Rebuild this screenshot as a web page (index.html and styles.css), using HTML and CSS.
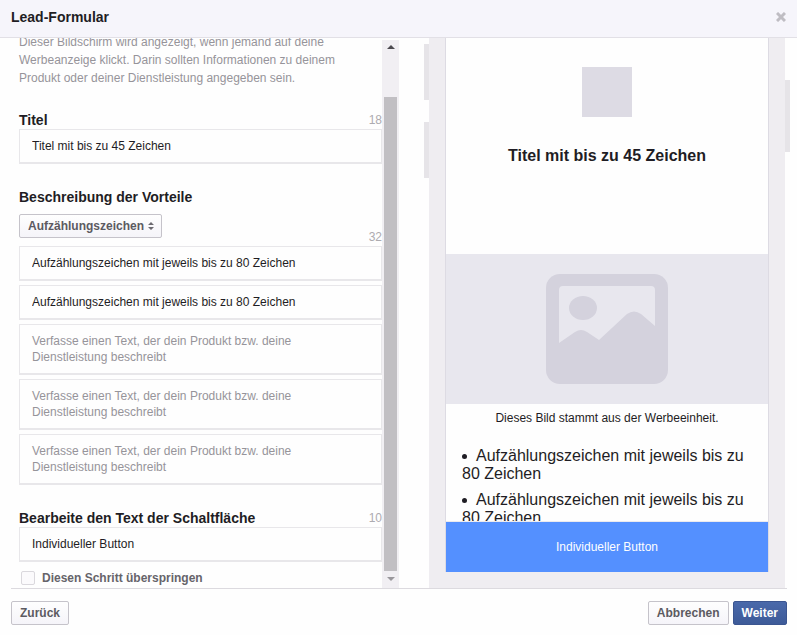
FILE: index.html
```html
<!DOCTYPE html>
<html lang="de">
<head>
  <meta charset="UTF-8" />
  <meta name="viewport" content="width=device-width, initial-scale=1.0" />
  <title>Lead-Formular</title>
  <link rel="stylesheet" href="styles.css">
</head>
<body>
  <div class="dialog">
    <header class="dialog-header">
      <h1>Lead-Formular</h1>
      <button type="button" class="close" aria-label="Schließen">
        <svg width="10" height="10" viewBox="0 0 10 10"><path d="M1 1l8 8M9 1l-8 8" stroke="#bfbdc3" stroke-width="3" fill="none"/></svg>
      </button>
    </header>

    <main class="dialog-body">
      <div class="form-pane">
        <form id="leadForm" class="lead-form">
          <p class="intro">Dieser Bildschirm wird angezeigt, wenn jemand auf deine Werbeanzeige klickt. Darin sollten Informationen zu deinem Produkt oder deiner Dienstleistung angegeben sein.</p>

          <section class="group">
            <div class="group-head">
              <label for="title">Titel</label>
              <span class="count">18</span>
            </div>
            <input class="field" type="text" id="title" value="Titel mit bis zu 45 Zeichen" />
          </section>

          <section class="group">
            <div class="group-head">
              <label for="format">Beschreibung der Vorteile</label>
            </div>
            <div class="format-row">
              <div class="select-wrap">
                <select id="format">
                  <option>Aufzählungszeichen</option>
                  <option>Absatz</option>
                </select>
                <svg class="select-arrows" width="6" height="8" viewBox="0 0 6 8"><path d="M0 3l3-3 3 3zM0 5h6l-3 3z" fill="#6c6a70"/></svg>
              </div>
              <span class="count">32</span>
            </div>
            <div class="bullets">
              <input class="field" type="text" aria-label="Vorteil 1" value="Aufzählungszeichen mit jeweils bis zu 80 Zeichen" />
              <input class="field" type="text" aria-label="Vorteil 2" value="Aufzählungszeichen mit jeweils bis zu 80 Zeichen" />
              <textarea class="field" rows="2" aria-label="Vorteil 3" placeholder="Verfasse einen Text, der dein Produkt bzw. deine Dienstleistung beschreibt"></textarea>
              <textarea class="field" rows="2" aria-label="Vorteil 4" placeholder="Verfasse einen Text, der dein Produkt bzw. deine Dienstleistung beschreibt"></textarea>
              <textarea class="field" rows="2" aria-label="Vorteil 5" placeholder="Verfasse einen Text, der dein Produkt bzw. deine Dienstleistung beschreibt"></textarea>
            </div>
          </section>

          <section class="group">
            <div class="group-head">
              <label for="buttonText">Bearbeite den Text der Schaltfläche</label>
              <span class="count">10</span>
            </div>
            <input class="field" type="text" id="buttonText" value="Individueller Button" />
          </section>

          <div class="skip">
            <input type="checkbox" id="skip" />
            <label for="skip">Diesen Schritt überspringen</label>
          </div>
        </form>

        <div class="scrollbar" aria-hidden="true">
          <span class="arrow up"></span>
          <span class="thumb"></span>
          <span class="arrow down"></span>
        </div>
      </div>

      <div class="phone">
        <span class="key volume-up"></span>
        <span class="key volume-down"></span>
        <span class="key power"></span>
        <div class="screen">
          <div class="screen-content">
            <div class="logo"></div>
            <h2>Titel mit bis zu 45 Zeichen</h2>
            <div class="picture">
              <svg width="122" height="110" viewBox="0 0 122 110">
                <rect width="122" height="110" rx="14" fill="#d4d2dd"/>
                <path d="M17 12h88q4 0 4 4v36L95 40q-7-5-14 0L53 66 41 58q-6-4-12 0L13 69V16q0-4 4-4z" fill="#e8e7ee"/>
                <ellipse cx="37" cy="34" rx="14" ry="12" fill="#d4d2dd"/>
              </svg>
            </div>
            <p class="caption">Dieses Bild stammt aus der Werbeeinheit.</p>
            <ul>
              <li>Aufzählungszeichen mit jeweils bis zu 80 Zeichen</li>
              <li>Aufzählungszeichen mit jeweils bis zu 80 Zeichen</li>
            </ul>
          </div>
          <button type="button" class="cta">Individueller Button</button>
        </div>
      </div>
    </main>

    <footer class="dialog-footer">
      <button type="button" class="btn">Zurück</button>
      <div class="actions">
        <button type="button" class="btn">Abbrechen</button>
        <button type="submit" form="leadForm" class="btn primary">Weiter</button>
      </div>
    </footer>
  </div>
</body>
</html>
```

FILE: styles.css
```css
* {
  box-sizing: border-box;
}
body {
  margin: 0;
  font-family: "Liberation Sans", Arial, sans-serif;
  font-size: 12px;
  color: #1f1d24;
  background-color: #fefefe;
}
h1, h2, p, ul {
  margin: 0;
  padding: 0;
}
button, input, select, textarea {
  font: inherit;
  color: inherit;
  margin: 0;
}
svg {
  display: block;
}
.dialog {
  display: flex;
  flex-direction: column;
  height: 100vh;
}

/* header */
.dialog-header {
  display: flex;
  align-items: center;
  justify-content: space-between;
  height: 38px;
  padding: 0 11px 3px;
  background-color: #f6f5fb;
  border-bottom: 1px solid #e2e0e6;
}
.dialog-header h1 {
  font-size: 14px;
  line-height: 18px;
}
.close {
  padding: 0;
  border: 0;
  background: none;
}

.dialog-body {
  display: flex;
  flex: 1;
  min-height: 0;
  gap: 30px;
  padding-right: 12px;
  overflow: hidden;
}

/* form */
.form-pane {
  display: flex;
  flex: 1;
  min-width: 0;
  overflow: hidden;
}
.lead-form {
  flex: 1;
  min-width: 0;
  margin-top: -5px;
  padding-left: 19px;
}
.intro {
  max-width: 340px;
  line-height: 18px;
  color: #96949a;
}
.group {
  margin-top: 24px;
}
.group-head {
  display: flex;
  justify-content: space-between;
  line-height: 18px;
}
.group-head label {
  font-size: 14px;
  font-weight: bold;
}
.count {
  font-size: 12px;
  line-height: 18px;
  color: #adabb0;
}
.format-row {
  display: flex;
  justify-content: space-between;
  align-items: flex-end;
  height: 40px;
}
.select-wrap {
  position: relative;
  align-self: flex-start;
  margin-top: 8px;
}
.select-wrap select {
  appearance: none;
  display: block;
  height: 24px;
  padding: 0 16px 0 8px;
  border: 1px solid #c5c3ca;
  border-radius: 2px;
  background: linear-gradient(#fefefe, #f5f4f9);
  font-weight: bold;
  color: #5c5a61;
}
.select-arrows {
  position: absolute;
  top: 8px;
  right: 8px;
}
.bullets {
  display: grid;
  gap: 4px;
}
.field {
  display: block;
  width: 100%;
  padding: 8px 12px;
  border: 1px solid #e8e7ea;
  border-bottom-width: 2px;
  border-radius: 0;
  background-color: #fefefe;
  line-height: 16px;
  resize: none;
}
input.field {
  height: 35px;
}
textarea.field {
  height: 51px;
  padding-right: 60px;
  overflow: hidden;
}
.field::placeholder {
  color: #96949a;
  opacity: 1;
}
.skip {
  display: flex;
  align-items: center;
  gap: 7px;
  margin-top: 7px;
  padding-left: 2px;
  line-height: 18px;
  font-weight: bold;
  color: #66646a;
}
.skip input {
  appearance: none;
  width: 14px;
  height: 14px;
  border: 1px solid #dad8dd;
  border-radius: 2px;
  background-color: #fbfafc;
}

/* scrollbar */
.scrollbar {
  display: flex;
  flex-direction: column;
  align-items: center;
  width: 17px;
  margin-top: 2px;
  padding: 5px 0 7px;
  background-color: #f1eff3;
}
.arrow {
  border: 4px solid transparent;
}
.arrow.up {
  border-top: 0;
  border-bottom-color: #4c4a50;
}
.arrow.down {
  border-bottom: 0;
  border-top-color: #99979c;
}
.thumb {
  flex: 1;
  width: 13px;
  margin: 48px 0 6px;
  background-color: #c1bfc3;
}

/* phone preview */
.phone {
  position: relative;
  display: flex;
  width: 356px;
  padding: 0 16px 16px;
  background-color: #efedf1;
}
.key {
  position: absolute;
  width: 5px;
  background-color: #e6e4e8;
}
.volume-up {
  top: 6px;
  left: -5px;
  height: 56px;
}
.volume-down {
  top: 84px;
  left: -5px;
  height: 56px;
}
.power {
  top: 42px;
  right: -5px;
  height: 72px;
}
.screen {
  display: flex;
  flex: 1;
  flex-direction: column;
  min-width: 0;
  border: 1px solid #dddbe3;
  border-width: 0 1px;
  background-color: #fefefe;
}
.screen-content {
  flex: 1;
  min-height: 0;
  overflow: hidden;
  border-bottom: 1px solid #ebeaee;
}
.logo {
  width: 50px;
  height: 50px;
  margin: 29px auto 0;
  background-color: #dddbe4;
}
.screen h2 {
  height: 107px;
  margin-top: 30px;
  font-size: 16px;
  line-height: 18px;
  text-align: center;
}
.picture {
  display: flex;
  align-items: center;
  justify-content: center;
  height: 150px;
  background-color: #e8e7ee;
}
.caption {
  margin: 5px 0 20px;
  line-height: 18px;
  text-align: center;
}
.screen ul {
  padding: 0 16px;
  list-style: none;
  font-size: 16px;
  line-height: 18px;
}
.screen li {
  margin-bottom: 8px;
}
.screen li::before {
  content: "";
  display: inline-block;
  width: 5px;
  height: 5px;
  margin-right: 9px;
  border-radius: 50%;
  background-color: #1f1d24;
  vertical-align: 2px;
}
.cta {
  height: 50px;
  padding: 0;
  border: 0;
  background-color: #5490ff;
  color: #fefefe;
}

/* footer */
.dialog-footer {
  display: flex;
  justify-content: space-between;
  margin: 0 10px 0 11px;
  padding: 12px 0 10px;
  border-top: 1px solid #dcdadf;
}
.actions {
  display: flex;
  gap: 4px;
}
.btn {
  height: 24px;
  padding: 0 8px;
  border: 1px solid #c5c3ca;
  border-radius: 2px;
  background: linear-gradient(#fefefe, #f5f4f9);
  font-weight: bold;
  color: #5c5a61;
}
.btn.primary {
  border-color: #3b5590;
  background: linear-gradient(#4a69aa, #3d5a98);
  color: #fefefe;
}
```
